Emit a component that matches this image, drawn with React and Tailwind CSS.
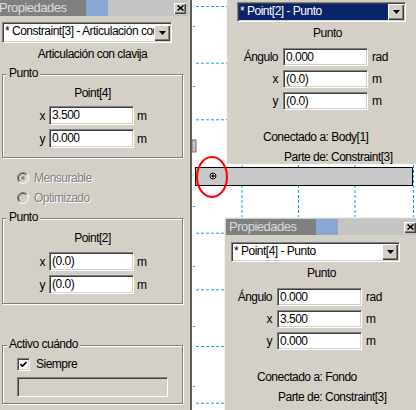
const sunken =
  "border border-t-[#808080] border-l-[#808080] border-b-white border-r-white shadow-[inset_1px_1px_0_#404040,inset_-1px_-1px_0_#d4d0c8]";
const raised =
  "bg-[#d4d0c8] shadow-[inset_1px_1px_0_#fff,inset_-1px_-1px_0_#404040,inset_-2px_-2px_0_#808080]";

function CloseButton() {
  return (
    <div className={`flex h-[11px] w-[12px] items-center justify-center ${raised}`}>
      <svg width="7" height="6" viewBox="0 0 7 6">
        <path d="M0.5 0.5L6.5 5.5M6.5 0.5L0.5 5.5" stroke="#000" strokeWidth="1.6" />
      </svg>
    </div>
  );
}

function TitleBar({ className = "" }) {
  return (
    <div
      className={`flex h-[16px] w-[192px] shrink-0 items-center justify-between bg-[linear-gradient(to_right,#808080_90px,#8aa6d2_90px,#8aa6d2_112px,#c4c4c4_112px)] pl-[3px] pr-[2px] ${className}`}
    >
      <span className="text-[13px] leading-[16px] text-[#dcdcdc]">Propiedades</span>
      <CloseButton />
    </div>
  );
}

function Combo({ text, selected, size }) {
  return (
    <div className={`flex shrink-0 items-center ${size} ${sunken} ${selected ? "bg-[#0a246a]" : "bg-white"}`}>
      <div
        className={`min-w-0 flex-1 self-stretch overflow-hidden whitespace-nowrap pl-[2px] leading-[17px] ${
          selected ? "text-white" : "text-black"
        }`}
      >
        {text}
      </div>
      <div className={`mr-[1px] flex h-[16px] w-[16px] shrink-0 items-center justify-center ${raised}`}>
        <svg width="7" height="4" viewBox="0 0 7 4">
          <path d="M0 0h7L3.5 4z" fill="#000" />
        </svg>
      </div>
    </div>
  );
}

function Input({ value, size }) {
  return <div className={`bg-white pl-[2px] leading-[16px] ${size} ${sunken}`}>{value}</div>;
}

function Group({ title, children, className = "" }) {
  return (
    <div className={`flex flex-col border border-[#808080] shadow-[inset_1px_1px_0_#fff,1px_1px_0_#fff] ${className}`}>
      <span className="-mt-[9px] ml-[4px] self-start bg-[#d4d0c8] px-[2px] leading-[14px]">{title}</span>
      {children}
    </div>
  );
}

function Row({ label, value, unit, className = "" }) {
  return (
    <div className={`flex items-center ${className}`}>
      <span className="w-[42px] text-right">{label}</span>
      <div className="ml-[4px]">
        <Input value={value} size="h-[19px] w-[85px]" />
      </div>
      <span className="ml-[3px]">{unit}</span>
    </div>
  );
}

function Radio({ label, checked, className = "" }) {
  return (
    <div className={`ml-[15px] flex h-[14px] items-center ${className}`}>
      <svg width="12" height="12" viewBox="0 0 12 12">
        <circle cx="6" cy="6" r="5" fill="#d4d0c8" />
        <path d="M9.9 2.1A5.5 5.5 0 0 0 2.1 9.9" stroke="#808080" fill="none" />
        <path d="M2.1 9.9A5.5 5.5 0 0 0 9.9 2.1" stroke="#fff" fill="none" />
        <path d="M9.2 2.8A4.5 4.5 0 0 0 2.8 9.2" stroke="#404040" fill="none" />
        {checked && <circle cx="6" cy="6" r="1.8" fill="#808080" />}
      </svg>
      <span className="ml-[5px] text-[#808080] [text-shadow:1px_1px_0_#fff]">{label}</span>
    </div>
  );
}

function PointPanel({ combo, selected, ang, x, y, conn }) {
  const row = (label, value, unit, mt) => (
    <div className={`flex items-center ${mt}`}>
      <span className="w-[41px] text-right">{label}</span>
      <div className="ml-[5px]">
        <Input value={value} size="h-[18px] w-[85px]" />
      </div>
      <span className="ml-[4px]">{unit}</span>
    </div>
  );
  return (
    <div className="flex w-[181px] flex-col">
      <Combo text={combo} selected={selected} size="h-[20px] w-[169px]" />
      <div className="mt-[3px] text-center leading-[16px]">Punto</div>
      {row("Ángulo", ang, "rad", "mt-[7px]")}
      {row("x", x, "m", "mt-[4px]")}
      {row("y", y, "m", "mt-[4px]")}
      <div className="mt-[19px] pl-[26px] leading-[16px]">Conectado a: {conn}</div>
      <div className="mt-[4px] pl-[47px] leading-[16px]">Parte de: Constraint[3]</div>
    </div>
  );
}

function Canvas() {
  const hy = [6, 62.7, 119.3, 176, 232.7, 289.3, 346, 402.7];
  const vx = [242, 298.5, 355, 413.5];
  const ticks = [26, 86, 206, 266, 326, 386];
  return (
    <svg className="absolute inset-0" width="224" height="410" viewBox="192 0 224 410">
      {hy.map((y) => (
        <line key={y} x1="196" x2="416" y1={y + 0.5} y2={y + 0.5} stroke="#10a2e6" strokeDasharray="3 2" />
      ))}
      {vx.map((x) => (
        <line key={x} x1={x} x2={x} y1="0" y2="410" stroke="#10a2e6" strokeDasharray="3 2" />
      ))}
      {ticks.map((y) => (
        <rect key={y} x="193" y={y} width="2" height="1" fill="#10a2e6" />
      ))}
      <rect x="192" y="140" width="4" height="12" fill="#c4c4c4" stroke="#707070" strokeWidth="1" />
      <rect x="195.5" y="167.5" width="217" height="18" fill="#c8c8c8" stroke="#000" />
      <circle cx="213" cy="176" r="3" fill="#fff" stroke="#000" strokeWidth="1" />
      <path d="M210 176h6M213 173v6" stroke="#000" strokeWidth="1" />
      <circle cx="213" cy="176" r="1" fill="#000" />
      <ellipse cx="212" cy="177" rx="15" ry="20" fill="none" stroke="#ff0000" strokeWidth="2" />
    </svg>
  );
}

export default function App() {
  return (
    <div className="relative flex h-[410px] w-[416px] overflow-hidden bg-white font-['Liberation_Sans',Arial,sans-serif] text-[12px] leading-[16px] tracking-[-0.5px] text-black">
      {/* left properties panel */}
      <div className="flex h-full w-[192px] shrink-0 flex-col border-r-2 border-[#5c5c5c] bg-[#d4d0c8]">
        <TitleBar className="-ml-[4px]" />
        <div className="ml-[2px] mt-[6px] flex w-[181px] flex-col">
          <Combo text="* Constraint[3] - Articulación con clavija" size="h-[21px] w-[170px]" />
          <div className="mt-[3px] text-center leading-[16px]">Articulación con clavija</div>

          <Group title="Punto" className="mt-[12px] pb-[9px]">
            <div className="mt-[5px] text-center leading-[16px]">Point[4]</div>
            <Row label="x" value="3.500" unit="m" className="mt-[5px]" />
            <Row label="y" value="0.000" unit="m" className="mt-[4px]" />
          </Group>

          <Radio label="Mensurable" checked className="mt-[13px] -ml-[2px]" />
          <Radio label="Optimizado" className="mt-[6px] -ml-[2px]" />

          <Group title="Punto" className="mt-[13px] pb-[9px]">
            <div className="mt-[6px] text-center leading-[16px]">Point[2]</div>
            <Row label="x" value="(0.0)" unit="m" className="mt-[6px]" />
            <Row label="y" value="(0.0)" unit="m" className="mt-[4px]" />
          </Group>

          <Group title="Activo cuándo" className="mt-[41px] pb-[6px]">
            <div className="ml-[14px] mt-[6px] flex h-[14px] items-center">
              <div className={`flex h-[13px] w-[13px] items-center justify-center bg-white ${sunken}`}>
                <svg width="7" height="7" viewBox="0 0 7 7">
                  <path d="M0.5 3L2.5 5L6.5 1" stroke="#000" strokeWidth="1.7" fill="none" />
                </svg>
              </div>
              <span className="ml-[6px]">Siempre</span>
            </div>
            <div className={`ml-[14px] mt-[6px] h-[20px] w-[151px] bg-[#d4d0c8] ${sunken}`} />
          </Group>
        </div>
      </div>

      {/* canvas */}
      <div className="relative flex-1 bg-white">
        <Canvas />
      </div>

      {/* top floating window */}
      <div className="absolute left-[227px] top-0 h-[164px] w-[192px] bg-[#d4d0c8] pl-[10px] pt-[2px]">
        <PointPanel combo="* Point[2] - Punto" selected ang="0.000" x="(0.0)" y="(0.0)" conn="Body[1]" />
      </div>

      {/* bottom floating window */}
      <div className="absolute left-[224px] top-[217px] h-[200px] w-[196px] border-l border-t border-[#f0f0f0] bg-[#d4d0c8] pl-[1px] pt-[1px]">
        <TitleBar />
        <div className="pl-[5px] pt-[7px]">
          <PointPanel combo="* Point[4] - Punto" ang="0.000" x="3.500" y="0.000" conn="Fondo" />
        </div>
      </div>
    </div>
  );
}
